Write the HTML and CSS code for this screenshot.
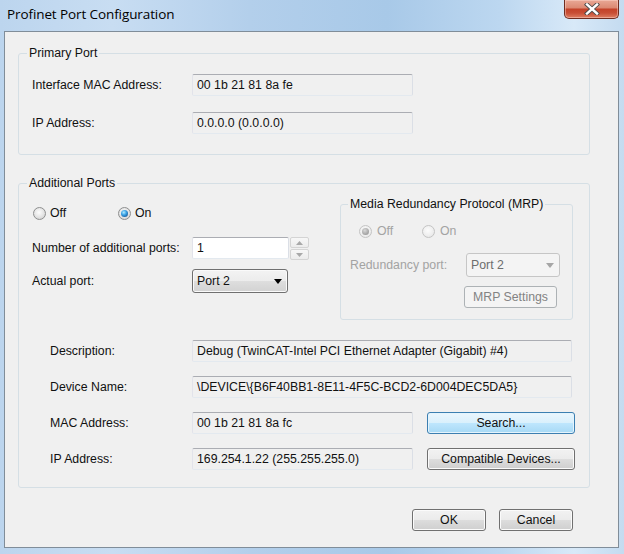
FILE: index.html
```html
<!DOCTYPE html>
<html>
<head>
<meta charset="utf-8">
<link rel="stylesheet" href="styles.css">
</head>
<body>
<div class="window">
  <div class="titlebar">
    <span class="title">Profinet Port Configuration</span>
    <button class="close" aria-label="Close">
      <svg width="18" height="12" viewBox="0 0 18 12">
        <path d="M4 1.5 L14 10.5 M14 1.5 L4 10.5" stroke="#4a4a4a" stroke-width="4.2" stroke-linecap="square" fill="none"/>
        <path d="M4 1.5 L14 10.5 M14 1.5 L4 10.5" stroke="#ffffff" stroke-width="2.4" stroke-linecap="square" fill="none"/>
      </svg>
    </button>
  </div>
  <div class="client">
    <fieldset class="group primary">
      <legend>Primary Port</legend>
      <div class="pbody">
        <div class="row">
          <span class="label">Interface MAC Address:</span>
          <span class="field w220">00 1b 21 81 8a fe</span>
        </div>
        <div class="row">
          <span class="label">IP Address:</span>
          <span class="field w220">0.0.0.0 (0.0.0.0)</span>
        </div>
      </div>
    </fieldset>

    <fieldset class="group additional">
      <legend>Additional Ports</legend>
      <div class="top">
        <div class="leftcol">
          <div class="radios">
            <label class="opt opt-off"><span class="radio"></span>Off</label>
            <label class="opt"><span class="radio checked"></span>On</label>
          </div>
          <div class="row r-num">
            <span class="label">Number of additional ports:</span>
            <span class="input">1</span>
            <span class="spin">
              <span class="spinbtn"><svg width="7" height="4" viewBox="0 0 7 4"><path d="M0 4 L3.5 0 L7 4Z" fill="#a8a8a8"/></svg></span>
              <span class="spinbtn"><svg width="7" height="4" viewBox="0 0 7 4"><path d="M0 0 L3.5 4 L7 0Z" fill="#a8a8a8"/></svg></span>
            </span>
          </div>
          <div class="row r-port">
            <span class="label">Actual port:</span>
            <span class="combo">
              <span class="ctext">Port 2</span>
              <svg width="8" height="5" viewBox="0 0 8 5"><path d="M0 0 L8 0 L4 5Z" fill="#000"/></svg>
            </span>
          </div>
        </div>

        <fieldset class="group mrp">
          <legend>Media Redundancy Protocol (MRP)</legend>
          <div class="mbody">
            <div class="radios mradios">
              <label class="opt opt-moff dis"><span class="radio dis checked"></span>Off</label>
              <label class="opt dis"><span class="radio dis"></span>On</label>
            </div>
            <div class="row r-red">
              <span class="label dis mlabel">Redundancy port:</span>
              <span class="combo dis mcombo">
                <span class="ctext">Port 2</span>
                <svg width="8" height="5" viewBox="0 0 8 5"><path d="M0 0 L8 0 L4 5Z" fill="#a6a6a6"/></svg>
              </span>
            </div>
            <div class="row r-mbtn">
              <button class="btn dis mbtn">MRP Settings</button>
            </div>
          </div>
        </fieldset>
      </div>

      <div class="details">
        <div class="row">
          <span class="label dlabel">Description:</span>
          <span class="field w380">Debug (TwinCAT-Intel PCI Ethernet Adapter (Gigabit) #4)</span>
        </div>
        <div class="row">
          <span class="label dlabel">Device Name:</span>
          <span class="field w380">\DEVICE\{B6F40BB1-8E11-4F5C-BCD2-6D004DEC5DA5}</span>
        </div>
        <div class="row">
          <span class="label dlabel">MAC Address:</span>
          <span class="field w220">00 1b 21 81 8a fc</span>
          <button class="btn focus wide">Search...</button>
        </div>
        <div class="row">
          <span class="label dlabel">IP Address:</span>
          <span class="field w220">169.254.1.22 (255.255.255.0)</span>
          <button class="btn wide">Compatible Devices...</button>
        </div>
      </div>
    </fieldset>

    <div class="actions">
      <button class="btn dlg">OK</button>
      <button class="btn dlg">Cancel</button>
    </div>
  </div>
</div>
</body>
</html>
```

FILE: styles.css
```css
* { box-sizing: border-box; }

html, body {
  margin: 0;
  padding: 0;
}

body {
  width: 624px;
  height: 554px;
  overflow: hidden;
  font-family: "Liberation Sans", Arial, sans-serif;
  font-size: 12.3px;
  color: #111;
}

.window {
  width: 624px;
  height: 554px;
  background:
    linear-gradient(to right, #bcd5ee 0%, #c8ddf2 18%, #b3cfeb 40%, #a8c9e8 62%, #bcd7f0 80%, #d8e9f8 92%, #c4dbf0 100%);
}

.titlebar {
  height: 31px;
  display: flex;
  justify-content: space-between;
  align-items: flex-start;
}

.title {
  margin: 5px 0 0 7px;
  font-family: "Open Sans", "Liberation Sans", sans-serif;
  font-size: 13.5px;
  line-height: 18px;
  color: #000;
  letter-spacing: -0.1px;
}

.close {
  width: 55px;
  height: 19px;
  margin: 0 5px 0 0;
  padding: 0;
  border: 1px solid #6f2d21;
  border-top: none;
  border-radius: 0 0 5px 5px;
  background: linear-gradient(#e9a896 0%, #dc8a74 42%, #c4432a 52%, #c84e35 72%, #de7e62 100%);
  box-shadow: inset 0 0 0 1px rgba(255, 220, 210, 0.45);
  display: flex;
  align-items: center;
  justify-content: center;
}

.close svg { display: block; }

.client {
  margin: 0 5px 0 4px;
  height: 517px;
  border: 1px solid #808d99;
  background: #f0f0f0;
  padding: 14px 0 0 13px;
}

/* group boxes */
.group {
  margin: 0;
  padding: 0;
  border: 1px solid #d5dfe5;
  border-radius: 3px;
  min-width: 0;
}

.group > legend {
  margin-left: 8px;
  padding: 0 2px;
  line-height: 14px;
  font-size: 12.3px;
}

.primary { width: 572px; }
.pbody { padding: 14px 0 20px 13px; }
.pbody .row + .row { margin-top: 16px; }

.additional { width: 572px; margin-top: 21px; }

.row {
  display: flex;
  align-items: center;
  height: 22px;
}

.label {
  width: 160px;
  flex: none;
  white-space: nowrap;
}

.field {
  height: 22px;
  flex: none;
  display: flex;
  align-items: center;
  padding-left: 4px;
  background: #f0f0f0;
  border: 1px solid;
  border-color: #abadb3 #dbdfe6 #e3e9ef #e2e3ea;
  border-radius: 2px;
  white-space: nowrap;
  overflow: hidden;
}

.w220 { width: 221px; }
.w380 { width: 380px; }

/* top section */
.top {
  display: flex;
  justify-content: space-between;
  align-items: flex-start;
  padding: 0 16px 0 13px;
}

.leftcol { margin-top: 15px; }

.radios {
  display: flex;
  align-items: center;
  height: 16px;
}

.opt {
  display: inline-flex;
  align-items: center;
  gap: 4px;
}

.opt-off { width: 85px; margin-left: 1px; }

.radio {
  width: 13px;
  height: 13px;
  border-radius: 50%;
  border: 1px solid #8e8f8f;
  background: radial-gradient(circle at 45% 40%, #fdfdfd 0%, #e8e8e8 45%, #c9c9c9 100%);
  display: inline-flex;
  align-items: center;
  justify-content: center;
  flex: none;
}

.radio.checked::after {
  content: "";
  width: 7px;
  height: 7px;
  border-radius: 50%;
  background: radial-gradient(circle at 40% 35%, #b4ecff 0%, #3aa3e6 40%, #1a5d9c 80%, #163f6e 100%);
}

.radio.dis {
  border-color: #c4c4c4;
  background: radial-gradient(circle at 45% 40%, #fcfcfc 0%, #f0f0f0 50%, #e2e2e2 100%);
}

.radio.dis.checked::after {
  background: radial-gradient(circle at 40% 35%, #d8d8d8 0%, #a8a8a8 60%, #8e8e8e 100%);
}

.dis { color: #a3a3a3; }

.r-num { margin-top: 16px; }

.input {
  width: 97px;
  height: 22px;
  display: flex;
  align-items: center;
  padding-left: 4px;
  background: #fff;
  border: 1px solid;
  border-color: #abadb3 #dbdfe6 #e3e9ef #e2e3ea;
  border-radius: 2px;
}

.spin {
  margin-left: 1px;
  width: 19px;
  height: 23px;
  display: flex;
  flex-direction: column;
  gap: 1px;
  align-self: flex-start;
}

.spinbtn {
  flex: 1;
  border: 1px solid #d4d4d4;
  border-radius: 2px;
  background: linear-gradient(#f7f7f7, #ececec);
  display: flex;
  align-items: center;
  justify-content: center;
}

.spinbtn svg { display: block; }

.r-port { margin-top: 10px; height: 24px; }

.combo {
  width: 96px;
  height: 24px;
  display: flex;
  align-items: center;
  justify-content: space-between;
  padding: 0 5px 0 4px;
  border: 1px solid #707070;
  border-radius: 3px;
  background: linear-gradient(#f3f3f3 0%, #ececec 50%, #dedede 51%, #d2d2d2 100%);
  box-shadow: inset 0 0 0 1px #fafafa;
}

.combo svg { display: block; }

/* MRP */
.mrp {
  width: 233px;
  margin-top: 7px;
}

.mrp > legend { margin-left: 7px; }

.mbody { padding: 12px 0 11px 9px; }

.mradios { margin-left: 9px; height: 16px; }
.opt-moff { width: 63px; }
.mradios .opt { gap: 5px; }

.r-red { margin-top: 14px; height: 24px; }
.mlabel { width: 116px; }

.mcombo {
  width: 94px;
  border-color: #c6c6c6;
  background: #f4f4f4;
  box-shadow: none;
  color: #6d6d6d;
}

.r-mbtn { margin-top: 9px; }

/* buttons */
.btn {
  height: 22px;
  padding: 0;
  font-family: inherit;
  font-size: 12.3px;
  color: #111;
  border: 1px solid #707070;
  border-radius: 3px;
  background: linear-gradient(#f2f2f2 0%, #ebebeb 50%, #dddddd 51%, #cfcfcf 100%);
  box-shadow: inset 0 0 0 1px #fbfbfb;
  text-align: center;
}

.btn.focus {
  border-color: #3c7fb1;
  background: linear-gradient(#eaf6fd 0%, #d9f0fc 50%, #bee6fd 51%, #a7d9f5 100%);
  box-shadow: inset 0 0 0 1px #e4f4fd;
}

.btn.dis {
  border-color: #adb2b5;
  background: #f4f4f4;
  box-shadow: none;
  color: #838383;
}

.mbtn { width: 93px; margin-left: 114px; }

.wide { width: 148px; margin-left: 14px; }

/* details */
.details {
  margin-top: 20px;
  padding: 0 0 17px 31px;
}

.details .row + .row { margin-top: 14px; }

.dlabel { width: 142px; }

/* dialog buttons */
.actions {
  display: flex;
  justify-content: flex-end;
  gap: 13px;
  margin-top: 21px;
  padding-right: 45px;
}

.dlg { width: 74px; }
```
